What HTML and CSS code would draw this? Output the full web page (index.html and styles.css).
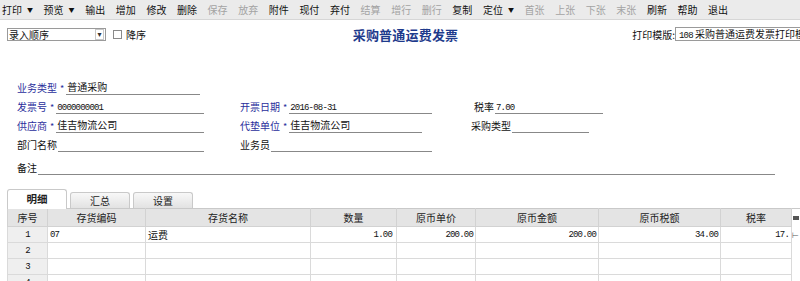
FILE: index.html
```html
<!DOCTYPE html>
<html lang="zh-CN">
<head>
    <meta charset="UTF-8">
    <title>采购普通运费发票</title>
    <link rel="stylesheet" href="styles.css">
</head>
<body>
    <div class="toolbar">
        <span class="tb-btn">打印<i class="caret">▼</i></span>
        <span class="tb-btn">预览<i class="caret">▼</i></span>
        <span class="tb-btn">输出</span>
        <span class="tb-btn">增加</span>
        <span class="tb-btn">修改</span>
        <span class="tb-btn">删除</span>
        <span class="tb-btn off">保存</span>
        <span class="tb-btn off">放弃</span>
        <span class="tb-btn">附件</span>
        <span class="tb-btn">现付</span>
        <span class="tb-btn">弃付</span>
        <span class="tb-btn off">结算</span>
        <span class="tb-btn off">增行</span>
        <span class="tb-btn off">删行</span>
        <span class="tb-btn">复制</span>
        <span class="tb-btn">定位<i class="caret">▼</i></span>
        <span class="tb-btn off">首张</span>
        <span class="tb-btn off">上张</span>
        <span class="tb-btn off">下张</span>
        <span class="tb-btn off">末张</span>
        <span class="tb-btn">刷新</span>
        <span class="tb-btn">帮助</span>
        <span class="tb-btn">退出</span>
    </div>

    <div class="subbar">
        <div class="sub-left">
            <div class="select">
                <span>录入顺序</span>
                <span class="select-arrow">▾</span>
            </div>
            <span class="check"></span>
            <span class="check-label">降序</span>
        </div>
        <h1 class="title">采购普通运费发票</h1>
        <div class="sub-right">
            <span class="tpl-label">打印模版:</span>
            <div class="tpl-input"><span class="mono">108</span> 采购普通运费发票打印模版</div>
        </div>
    </div>

    <div class="form">
        <div class="frow">
            <div class="field c1 narrow">
                <span class="label req-label">业务类型</span><span class="req">*</span>
                <span class="value">普通采购</span>
            </div>
        </div>
        <div class="frow">
            <div class="field c1">
                <span class="label req-label">发票号</span><span class="req">*</span>
                <span class="value mono">0000000001</span>
            </div>
            <div class="field c2">
                <span class="label req-label">开票日期</span><span class="req">*</span>
                <span class="value mono">2016-08-31</span>
            </div>
            <div class="field c3">
                <span class="label">税率</span>
                <span class="value mono">7.00</span>
            </div>
        </div>
        <div class="frow">
            <div class="field c1">
                <span class="label req-label">供应商</span><span class="req">*</span>
                <span class="value">佳吉物流公司</span>
            </div>
            <div class="field c2 narrow">
                <span class="label req-label">代垫单位</span><span class="req">*</span>
                <span class="value">佳吉物流公司</span>
            </div>
            <div class="field c3 wide-gap">
                <span class="label">采购类型</span>
                <span class="value"></span>
            </div>
        </div>
        <div class="frow">
            <div class="field c1">
                <span class="label">部门名称</span>
                <span class="value"></span>
            </div>
            <div class="field c2">
                <span class="label">业务员</span>
                <span class="value"></span>
            </div>
        </div>
        <div class="frow tall">
            <div class="field full">
                <span class="label">备注</span>
                <span class="value"></span>
            </div>
        </div>
    </div>

    <div class="tabs">
        <span class="tab active">明细</span>
        <span class="tab">汇总</span>
        <span class="tab">设置</span>
    </div>

    <table class="grid">
        <colgroup>
            <col class="w-no"><col class="w-code"><col class="w-name"><col class="w-qty">
            <col class="w-price"><col class="w-amt"><col class="w-tax"><col class="w-rate"><col class="w-scroll">
        </colgroup>
        <thead>
            <tr>
                <th>序号</th><th>存货编码</th><th>存货名称</th><th>数量</th>
                <th>原币单价</th><th>原币金额</th><th>原币税额</th><th>税率</th>
                <th class="scroll"><span class="scroll-top"></span></th>
            </tr>
        </thead>
        <tbody>
            <tr>
                <td class="no">1</td><td class="mono">07</td><td>运费</td>
                <td class="num">1.00</td><td class="num">200.00</td><td class="num">200.00</td>
                <td class="num">34.00</td><td class="num">17.</td>
                <td class="scroll"><span class="scroll-mark">⊢</span></td>
            </tr>
            <tr><td class="no">2</td><td></td><td></td><td></td><td></td><td></td><td></td><td></td><td class="scroll"></td></tr>
            <tr><td class="no">3</td><td></td><td></td><td></td><td></td><td></td><td></td><td></td><td class="scroll"></td></tr>
            <tr><td class="no">4</td><td></td><td></td><td></td><td></td><td></td><td></td><td></td><td class="scroll"></td></tr>
        </tbody>
    </table>
</body>
</html>
```

FILE: styles.css
```css
body {
    margin: 0;
    font-family: "Noto Sans CJK SC", "DejaVu Sans", sans-serif;
    font-size: 10px;
    color: #111;
    background: #fff;
    overflow: hidden;
}

.mono {
    font-family: "Liberation Mono", "DejaVu Sans Mono", monospace;
    font-size: 9px;
    letter-spacing: -0.8px;
}

/* toolbar */
.toolbar {
    display: flex;
    align-items: center;
    height: 19px;
    background: #ebebeb;
    border-bottom: 1px solid #d6d6d6;
}

.tb-btn {
    display: flex;
    align-items: center;
    padding: 0 5.3px;
    font-size: 10px;
    line-height: 19px;
    color: #111;
    white-space: nowrap;
}

.tb-btn:first-child {
    padding-left: 2px;
}

.tb-btn.off {
    color: #a3a3a3;
}

.caret {
    font-style: normal;
    font-size: 6px;
    margin-left: 5px;
}

/* sub bar */
.subbar {
    display: grid;
    grid-template-columns: 1fr auto 1fr;
    align-items: center;
    height: 28px;
    padding-left: 7px;
}

.sub-left {
    display: flex;
    align-items: center;
}

.select {
    display: flex;
    align-items: center;
    justify-content: space-between;
    width: 96px;
    height: 11px;
    border: 1px solid #9a9a9a;
    padding-left: 1px;
    font-size: 10px;
    line-height: 11px;
}

.select-arrow {
    width: 7px;
    height: 9px;
    margin-right: 1px;
    border: 1px solid #c8c8c8;
    font-size: 8px;
    line-height: 8px;
    text-align: center;
    color: #333;
}

.check {
    width: 7px;
    height: 7px;
    margin-left: 7px;
    border: 1px solid #8a8a8a;
    background: #fff;
}

.check-label {
    margin-left: 4px;
}

.title {
    margin: 0;
    padding-left: 4px;
    font-size: 13px;
    font-weight: bold;
    color: #1e3a8c;
    letter-spacing: 0.2px;
}

.sub-right {
    display: flex;
    align-items: center;
    justify-content: flex-end;
    margin-right: -40px;
}

.tpl-label {
    font-size: 10px;
}

.tpl-input {
    width: 160px;
    height: 12px;
    border: 1px solid #9a9a9a;
    padding-left: 3px;
    font-size: 10px;
    line-height: 12px;
    white-space: nowrap;
    overflow: hidden;
}

/* header form */
.form {
    padding: 28px 0 0 17px;
}

.frow {
    display: flex;
    align-items: flex-end;
    height: 19px;
}

.frow.tall {
    height: 23px;
}

.field {
    display: flex;
    align-items: flex-end;
}

.label {
    font-size: 10px;
    line-height: 14px;
    white-space: nowrap;
    margin-right: 1px;
}

.req-label {
    color: #2a2e9c;
}

.req {
    color: #2a2e9c;
    font-size: 9px;
    line-height: 12px;
    margin: 0 2px 0 2px;
}

.value {
    flex: 1;
    height: 14px;
    line-height: 14px;
    border-bottom: 1px solid #888;
    padding-left: 1px;
    white-space: nowrap;
}

.value.mono {
    line-height: 19px;
}

.c1 {
    width: 187px;
}

.c1.narrow {
    width: 183px;
}

.c2 {
    width: 192px;
    margin-left: 36px;
}

.c2.narrow {
    width: 182px;
}

.c3 {
    width: 129px;
    margin-left: 42px;
}

.c3.wide-gap {
    width: 118px;
    margin-left: 49px;
}

.full {
    width: 758px;
}

/* tabs */
.tabs {
    display: flex;
    align-items: flex-end;
    gap: 3px;
    height: 19px;
    margin-top: 14px;
    padding-left: 7px;
}

.tab {
    width: 58px;
    height: 15px;
    border: 1px solid #c9c9c9;
    border-bottom: none;
    border-radius: 3px 3px 0 0;
    background: linear-gradient(#f8f8f8, #e2e2e2);
    text-align: center;
    line-height: 15px;
    font-size: 10px;
    color: #222;
}

.tab.active {
    height: 19px;
    line-height: 18px;
    background: #fff;
    font-weight: bold;
    font-size: 10.5px;
    position: relative;
    z-index: 1;
    margin-bottom: -1px;
}

/* detail grid */
.grid {
    margin-left: 7px;
    border-collapse: collapse;
    table-layout: fixed;
    width: 793px;
    border-top: 1px solid #c9c9c9;
}

.w-no { width: 40px; }
.w-code { width: 98px; }
.w-name { width: 165px; }
.w-qty { width: 86px; }
.w-price { width: 79px; }
.w-amt { width: 123px; }
.w-tax { width: 122px; }
.w-rate { width: 71px; }
.w-scroll { width: 9px; }

.grid th {
    height: 17px;
    padding: 0;
    background: #e4e4e4;
    border: 1px solid #d2d2d2;
    border-top: none;
    font-weight: normal;
    font-size: 10px;
    color: #222;
}

.grid td {
    height: 15px;
    padding: 0 2px 0 2px;
    border: 1px solid #dadada;
    font-size: 10px;
    line-height: 14px;
    white-space: nowrap;
    overflow: hidden;
}

.grid td.mono,
.grid td.no,
.grid td.num {
    font-family: "Liberation Mono", "DejaVu Sans Mono", monospace;
    font-size: 9px;
    letter-spacing: -0.8px;
}

.grid td.no {
    background: #efefef;
    text-align: center;
}

.grid td.num {
    text-align: right;
}

.grid td.num:nth-child(4) {
    padding-right: 4px;
}

.grid .scroll {
    background: #fff;
    border: none;
    border-left: 1px solid #dadada;
    padding: 0;
}

.scroll-top {
    display: block;
    width: 6px;
    height: 4px;
    margin: 0 auto;
    border-top: 3px solid #555;
    border-bottom: 1px solid #555;
    box-sizing: border-box;
}

.scroll-mark {
    display: block;
    font-size: 8px;
    line-height: 14px;
    color: #555;
}
```
